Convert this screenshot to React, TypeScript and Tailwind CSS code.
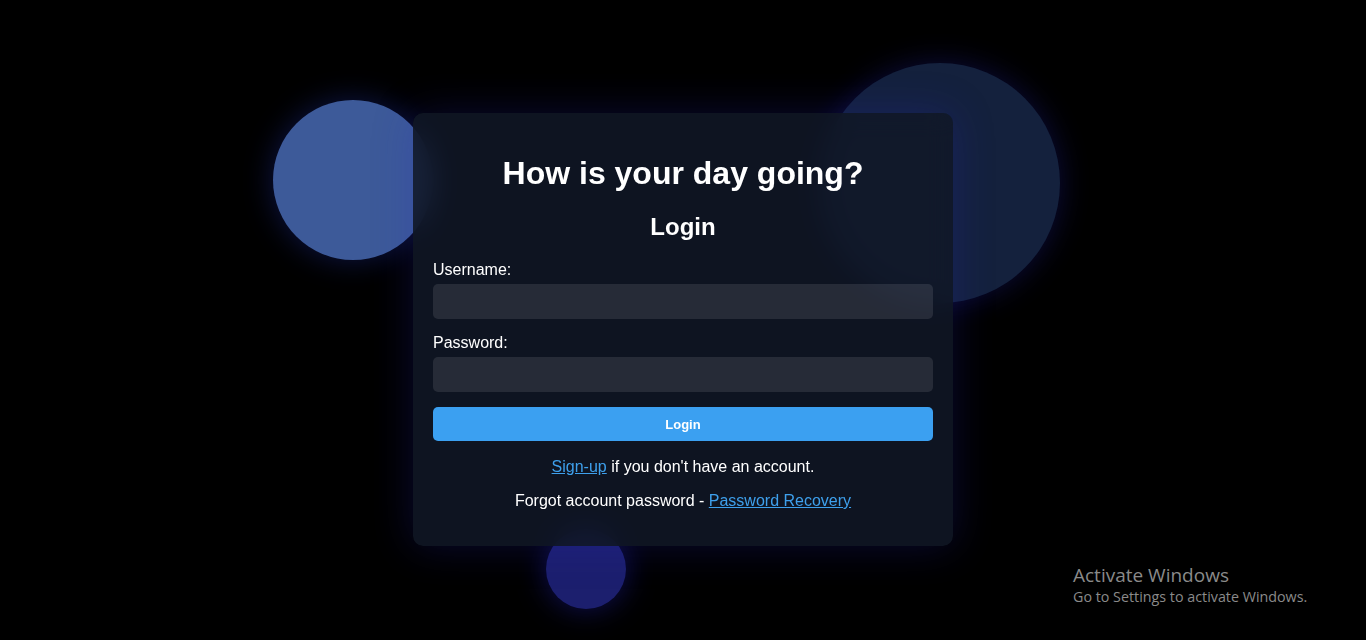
export default function App() {
  return (
    <div className="relative w-full h-[640px] bg-black overflow-hidden font-['Liberation_Sans',Arial,sans-serif] text-white">
      {/* decorative blobs */}
      <div className="absolute left-[273px] top-[100px] w-[160px] h-[160px] rounded-full bg-[#3d5a99] shadow-[0_0_30px_rgba(40,60,200,0.35)]" />
      <div className="absolute left-[820px] top-[63px] w-[240px] h-[240px] rounded-full bg-[#14213d] shadow-[0_0_30px_rgba(40,40,200,0.3)]" />
      <div className="absolute left-[546px] top-[529px] w-[80px] h-[80px] rounded-full bg-[#1c1f6e] shadow-[0_0_30px_rgba(40,40,220,0.4)]" />

      <div className="relative flex justify-center pt-[113px]">
        <div className="w-[540px] px-[20px] pt-[20px] pb-[36px] rounded-[10px] bg-[rgba(17,24,39,0.85)] backdrop-blur-md shadow-[0_0_40px_rgba(40,40,200,0.25)]">
          <h1 className="mt-[22px] text-[32px] leading-[37px] font-bold text-center">How is your day going?</h1>
          <h2 className="mt-[21px] text-[24px] leading-[28px] font-bold text-center">Login</h2>

          <label className="block mt-[20px] text-[16px] leading-[18px]">Username:</label>
          <input className="block w-full mt-[5px] h-[35px] rounded-[5px] bg-[rgba(255,255,255,0.1)] outline-none" />

          <label className="block mt-[15px] text-[16px] leading-[18px]">Password:</label>
          <input type="password" className="block w-full mt-[5px] h-[35px] rounded-[5px] bg-[rgba(255,255,255,0.1)] outline-none" />

          <button className="block w-full mt-[15px] h-[34px] rounded-[5px] bg-[#3ba0f1] text-[13px] leading-[16px] pt-[1px] font-bold text-white">
            Login
          </button>

          <p className="mt-[17px] text-[16px] leading-[18px] text-center">
            <a href="#" className="text-[#3ea0ec] underline">Sign-up</a> if you don't have an account.
          </p>
          <p className="mt-[16px] text-[16px] leading-[18px] text-center">
            Forgot account password - <a href="#" className="text-[#3ea0ec] underline">Password Recovery</a>
          </p>
        </div>
      </div>

      {/* OS watermark overlay */}
      <div className="absolute left-[1073px] top-[563px] font-['Open_Sans',sans-serif] text-[#8a8a8a]">
        <div className="text-[19px] leading-[24px]">Activate Windows</div>
        <div className="text-[14.3px] leading-[20px]">Go to Settings to activate Windows.</div>
      </div>
    </div>
  );
}
